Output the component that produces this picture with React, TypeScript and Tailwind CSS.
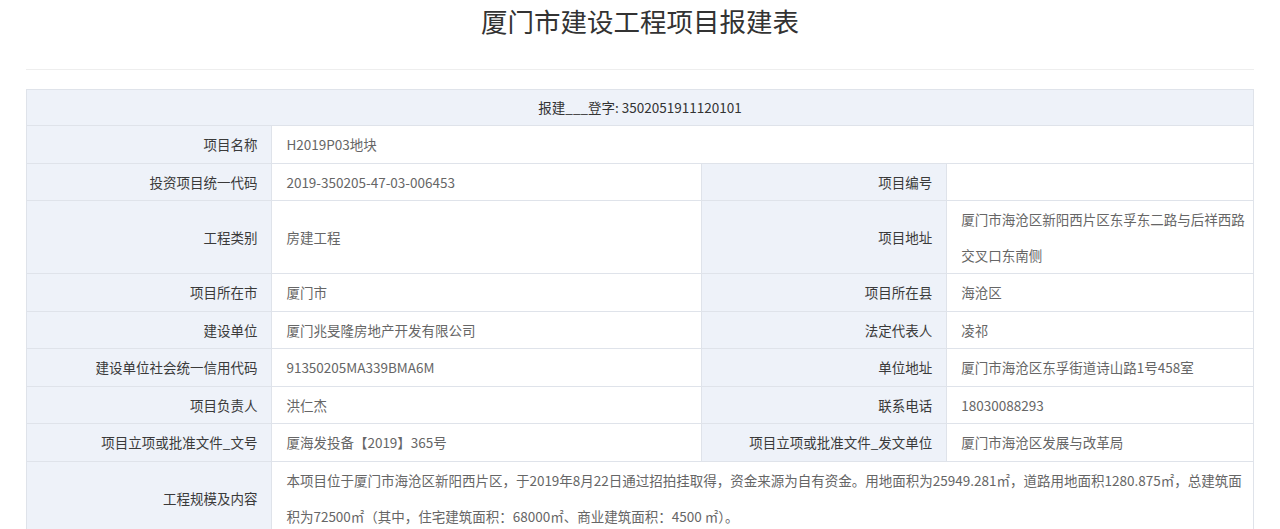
import React from "react";

const font = { fontFamily: '"Noto Sans CJK SC", "Noto Sans", sans-serif' };

const labelCls =
  "bg-[#eef2f9] border border-[#dfe3ea] text-right pr-[14px] pl-2 text-[#3a3a3a] leading-[36.5px] align-middle";
const valueCls =
  "bg-white border border-[#dfe3ea] text-left pl-[14px] pr-[4px] text-[#666] leading-[36.5px] align-middle";

const Label: React.FC<{ children?: React.ReactNode }> = ({ children }) => (
  <td className={labelCls}>{children}</td>
);

const Value: React.FC<{ children?: React.ReactNode; span?: number; tight?: boolean }> = ({
  children,
  span,
  tight,
}) => (
  <td className={tight ? valueCls.replace("leading-[36.5px]", "leading-[36px]") : valueCls} colSpan={span}>
    {children}
  </td>
);

export default function App() {
  return (
    <div className="bg-white w-[1280px] min-h-[529px] px-[26px] text-[13.5px]" style={font}>
      <h1 className="text-center text-[26.5px] leading-[42px] text-[#333] font-normal">
        厦门市建设工程项目报建表
      </h1>
      <div className="mt-[27px] h-px bg-[#eeeeee]" />
      <table className="mt-[19px] w-full table-fixed border-collapse">
        <colgroup>
          <col className="w-[20%]" />
          <col className="w-[35%]" />
          <col className="w-[20%]" />
          <col className="w-[25%]" />
        </colgroup>
        <tbody>
          <tr>
            <td
              colSpan={4}
              className="bg-[#eef2f9] border border-[#dfe3ea] text-center text-[#333] leading-[35px]"
            >
              报建___登字: 3502051911120101
            </td>
          </tr>
          <tr>
            <Label>项目名称</Label>
            <Value span={3}>H2019P03地块</Value>
          </tr>
          <tr>
            <Label>投资项目统一代码</Label>
            <Value>2019-350205-47-03-006453</Value>
            <Label>项目编号</Label>
            <Value />
          </tr>
          <tr>
            <Label>工程类别</Label>
            <Value>房建工程</Value>
            <Label>项目地址</Label>
            <td className="bg-white border border-[#dfe3ea] text-left pl-[14px] pr-[4px] text-[#666] leading-[36px] align-middle">
              厦门市海沧区新阳西片区东孚东二路与后祥西路交叉口东南侧
            </td>
          </tr>
          <tr>
            <Label>项目所在市</Label>
            <Value>厦门市</Value>
            <Label>项目所在县</Label>
            <Value>海沧区</Value>
          </tr>
          <tr>
            <Label>建设单位</Label>
            <Value>厦门兆旻隆房地产开发有限公司</Value>
            <Label>法定代表人</Label>
            <Value>凌祁</Value>
          </tr>
          <tr>
            <Label>建设单位社会统一信用代码</Label>
            <Value>91350205MA339BMA6M</Value>
            <Label>单位地址</Label>
            <Value>厦门市海沧区东孚街道诗山路1号458室</Value>
          </tr>
          <tr>
            <Label>项目负责人</Label>
            <Value>洪仁杰</Value>
            <Label>联系电话</Label>
            <Value>18030088293</Value>
          </tr>
          <tr>
            <Label>项目立项或批准文件_文号</Label>
            <Value>厦海发投备【2019】365号</Value>
            <Label>项目立项或批准文件_发文单位</Label>
            <Value>厦门市海沧区发展与改革局</Value>
          </tr>
          <tr>
            <Label>工程规模及内容</Label>
            <Value span={3}>
              <span className="block whitespace-nowrap">
                本项目位于厦门市海沧区新阳西片区，于2019年8月22日通过招拍挂取得，资金来源为自有资金。用地面积为25949.281㎡，道路用地面积1280.875㎡，总建筑面
              </span>
              <span className="block whitespace-nowrap">
                积为72500㎡（其中，住宅建筑面积：68000㎡、商业建筑面积：4500 ㎡）。
              </span>
            </Value>
          </tr>
        </tbody>
      </table>
    </div>
  );
}
